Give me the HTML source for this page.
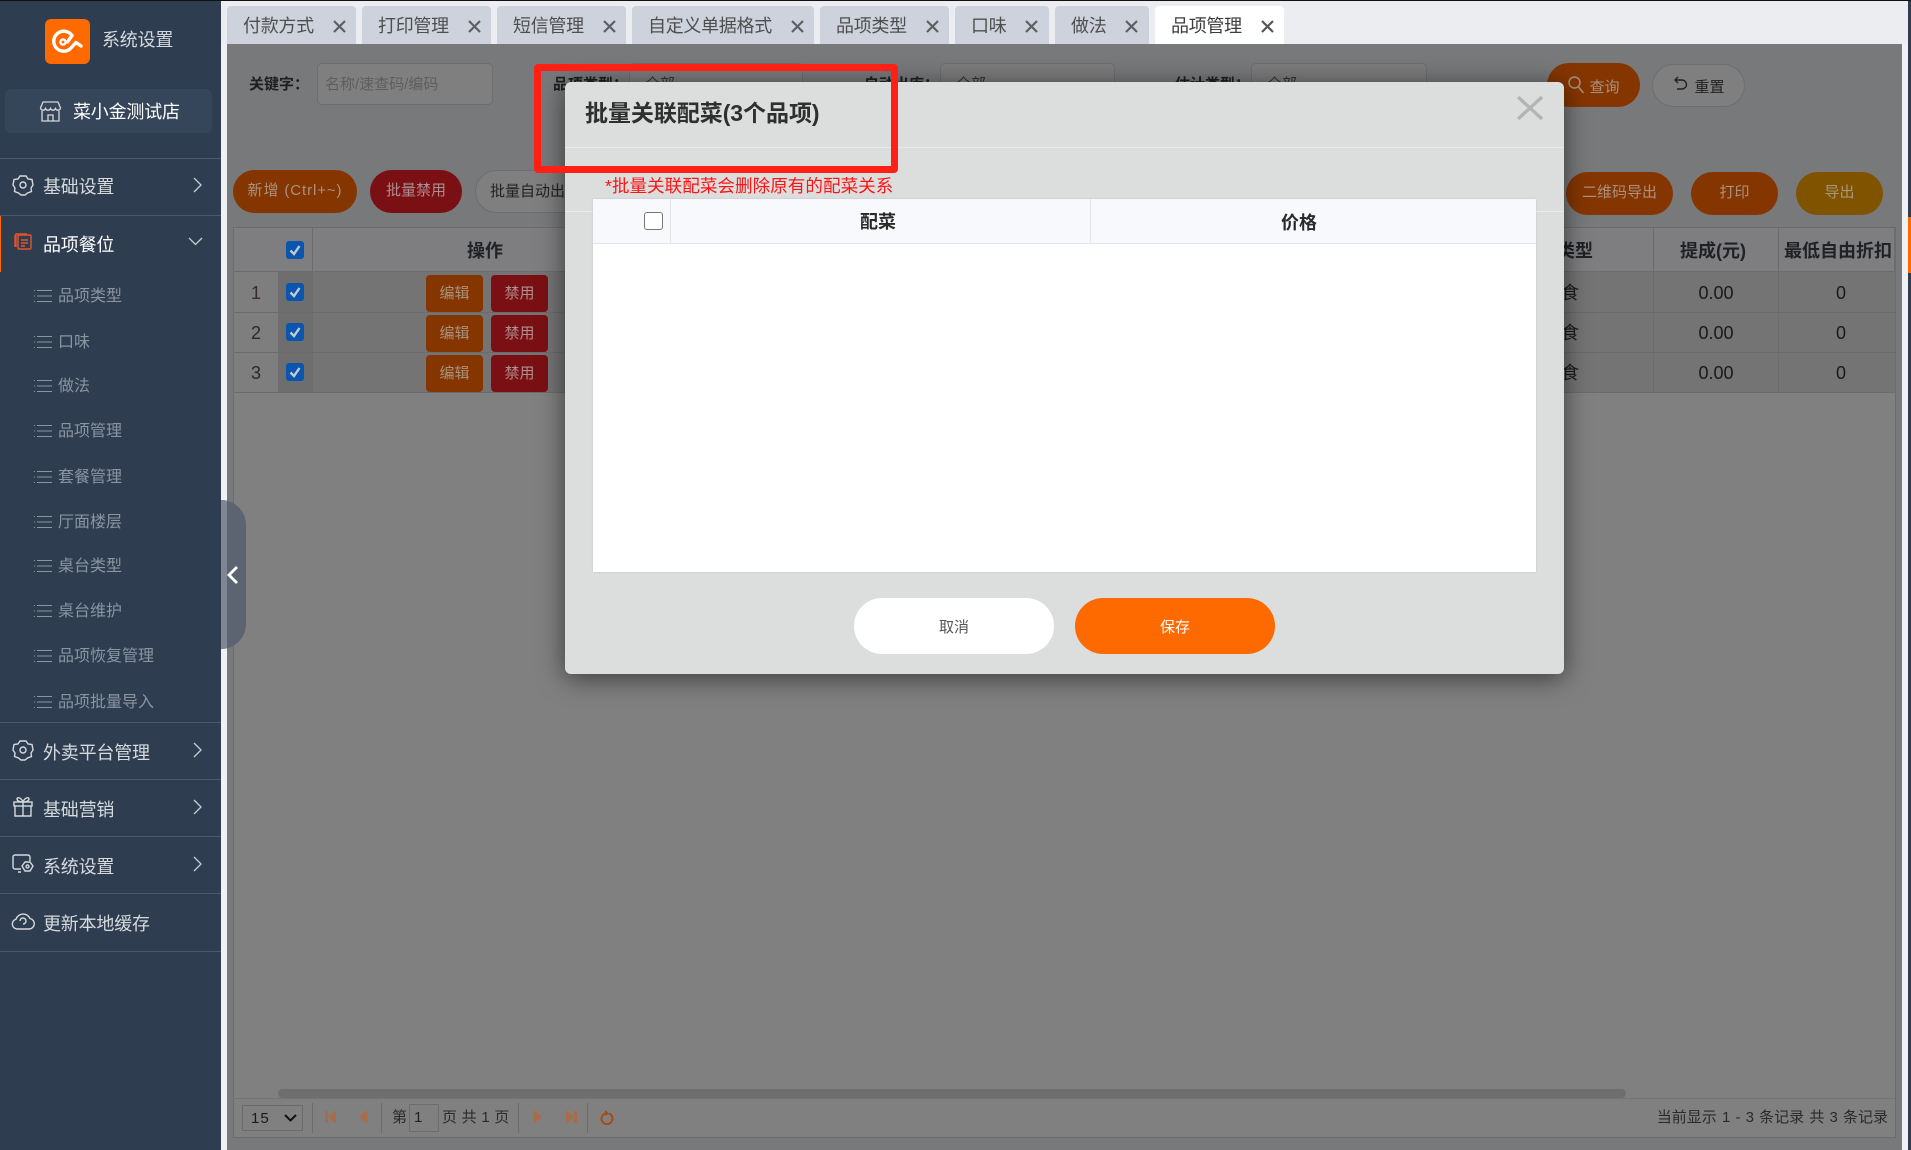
<!DOCTYPE html>
<html lang="zh"><head><meta charset="utf-8"><title>品项管理</title>
<style>
*{box-sizing:border-box}
html,body{margin:0;padding:0;width:1911px;height:1150px;overflow:hidden;background:#f0f1f4;font-family:"Liberation Sans","Noto Sans CJK SC",sans-serif;color:#222}
div,span,svg{position:absolute}
.t{white-space:nowrap;line-height:30px;height:30px}
.c{text-align:center}
.sb{left:0;top:0;width:221px;height:1150px;background:#2e3d50}
.ln{left:0;width:221px;height:1px;background:#4a596c}
.m{left:43px;font-size:18px;color:#d6dade;width:170px;margin-top:2px;letter-spacing:-.2px}
.s{left:58px;font-size:16px;color:#8b95a0;width:150px;margin-top:2px}
.ic{left:34px;width:18px;height:14px;margin-top:1px}
.tab{top:6px;height:38px;background:#cdd2dc;border-radius:4px 4px 0 0}
.tab b{position:absolute;left:16px;top:5px;font-weight:400;font-size:18px;line-height:30px;color:#4e4e4e;white-space:nowrap;letter-spacing:-.3px}
.tab svg{top:14px;width:13px;height:13px;margin-left:-1px}
.sel{height:42px;top:63px;background:#7c7c7d;border:1px solid #6c6d6f;border-radius:5px;font-size:15px;line-height:42px;padding-left:15px;color:#333}
.lab{top:70px;font-size:15px;font-weight:700;color:#1f1f1f;margin-left:-1px}
.pill{border-radius:22px;height:43px;font-size:15px;line-height:41px;text-align:center;white-space:nowrap}
.or{background:#853600;color:#a8917f}
.rd{background:#7a1014;color:#ad8f90}
.cb{width:18px;height:18px;left:286px;background:#0a55ad;border-radius:3px}
.cb svg{left:3px;top:3px;width:12px;height:12px}
.b{height:37px;width:57px;border-radius:4px;font-size:15px;line-height:38px;text-align:center}
.h{font-size:18px;font-weight:700;color:#1f2124}
.d{font-size:18px;color:#1a1a1a;margin-top:1px}
.vl{width:1px;background:#6c6c6d}
.hl{height:1px;background:#6b6b6c}
</style></head><body>

<!-- sidebar -->
<div class="sb"></div>
<div style="left:0;top:0;width:1911px;height:1px;background:#111;z-index:9"></div>
<div style="left:45px;top:19px;width:45px;height:45px;background:#ff6a00;border-radius:6px"></div>
<svg style="left:52px;top:29px" width="32" height="26" viewBox="0 0 32 26" fill="none" stroke="#fff" stroke-width="3.400" stroke-linecap="round" stroke-linejoin="round"><path d="M20 6.500A10 10 0 1 0 18 20L24 13.500 29 17"/><path d="M20 6.500L15.500 13"/><circle cx="11" cy="13" r="2.600" stroke-width="2.400"/></svg>
<div class="t" style="left:102px;top:25px;font-size:18px;color:#d5d8dc;letter-spacing:-.2px">系统设置</div>
<div style="left:5px;top:89px;width:207px;height:44px;background:#35465a;border-radius:6px"></div>
<svg style="left:39px;top:100px" width="23" height="23" viewBox="0 0 23 23" fill="none" stroke="#d5d9dd" stroke-width="1.300"><path d="M4 2h15l2.500 6a2.600 2.600 0 0 1-5 .5 2.700 2.700 0 0 1-5 0 2.700 2.700 0 0 1-5 0 2.600 2.600 0 0 1-5-.5z"/><path d="M3 11v10h17V11M9 21v-6h5v6"/></svg>
<div class="t" style="left:73px;top:97px;font-size:18px;color:#fff;letter-spacing:-.2px">菜小金测试店</div>
<div class="ln" style="top:158px"></div><div class="ln" style="top:215px"></div>
<svg style="left:12px;top:174px" width="22" height="22" viewBox="0 0 22 22" fill="none" stroke="#d5d9dd" stroke-width="1.400"><path d="M8 2h6l2 3 4 .5 1 5.500-2 3 .5 3.500-4 1.500L13 21H9l-2.500-2-4-1.500.5-3.500-2-3 1-5.500 4-.5z"/><circle cx="11" cy="11" r="3"/></svg>
<div class="t m" style="top:170px">基础设置</div>
<svg style="left:192px;top:176px" width="12" height="18" viewBox="0 0 12 18" fill="none" stroke="#c9ced3" stroke-width="1.300"><path d="M2 2l7 7-7 7"/></svg>

<div style="left:0;top:216px;width:1px;height:56px;background:#ff6a00"></div>
<svg style="left:14px;top:232px" width="18" height="19" viewBox="0 0 18 19" fill="none" stroke="#e2552b" stroke-width="1.400"><path d="M2 15V2h11"/><path d="M1 3v12"/><rect x="4" y="3" width="13" height="14" rx="1"/><path d="M7 8h7M7 11h7M7 14h4"/></svg>
<div class="t m" style="top:228px;color:#fff">品项餐位</div>
<svg style="left:187px;top:236px" width="17" height="11" viewBox="0 0 17 11" fill="none" stroke="#c9ced3" stroke-width="1.300"><path d="M2 2l6.500 6.500L15 2"/></svg>

<svg class="ic" style="top:288px" viewBox="0 0 18 14" stroke="#8b95a0" stroke-width="1"><path d="M0 1.500h1M0 7h1M0 12.500h1M3 1.500h15M3 7h15M3 12.500h15"/></svg><div class="t s" style="top:280px">品项类型</div>
<svg class="ic" style="top:334px" viewBox="0 0 18 14" stroke="#8b95a0" stroke-width="1"><path d="M0 1.500h1M0 7h1M0 12.500h1M3 1.500h15M3 7h15M3 12.500h15"/></svg><div class="t s" style="top:326px">口味</div>
<svg class="ic" style="top:378px" viewBox="0 0 18 14" stroke="#8b95a0" stroke-width="1"><path d="M0 1.500h1M0 7h1M0 12.500h1M3 1.500h15M3 7h15M3 12.500h15"/></svg><div class="t s" style="top:370px">做法</div>
<svg class="ic" style="top:423px" viewBox="0 0 18 14" stroke="#8b95a0" stroke-width="1"><path d="M0 1.500h1M0 7h1M0 12.500h1M3 1.500h15M3 7h15M3 12.500h15"/></svg><div class="t s" style="top:415px">品项管理</div>
<svg class="ic" style="top:469px" viewBox="0 0 18 14" stroke="#8b95a0" stroke-width="1"><path d="M0 1.500h1M0 7h1M0 12.500h1M3 1.500h15M3 7h15M3 12.500h15"/></svg><div class="t s" style="top:461px">套餐管理</div>
<svg class="ic" style="top:514px" viewBox="0 0 18 14" stroke="#8b95a0" stroke-width="1"><path d="M0 1.500h1M0 7h1M0 12.500h1M3 1.500h15M3 7h15M3 12.500h15"/></svg><div class="t s" style="top:506px">厅面楼层</div>
<svg class="ic" style="top:558px" viewBox="0 0 18 14" stroke="#8b95a0" stroke-width="1"><path d="M0 1.500h1M0 7h1M0 12.500h1M3 1.500h15M3 7h15M3 12.500h15"/></svg><div class="t s" style="top:550px">桌台类型</div>
<svg class="ic" style="top:603px" viewBox="0 0 18 14" stroke="#8b95a0" stroke-width="1"><path d="M0 1.500h1M0 7h1M0 12.500h1M3 1.500h15M3 7h15M3 12.500h15"/></svg><div class="t s" style="top:595px">桌台维护</div>
<svg class="ic" style="top:648px" viewBox="0 0 18 14" stroke="#8b95a0" stroke-width="1"><path d="M0 1.500h1M0 7h1M0 12.500h1M3 1.500h15M3 7h15M3 12.500h15"/></svg><div class="t s" style="top:640px">品项恢复管理</div>
<svg class="ic" style="top:694px" viewBox="0 0 18 14" stroke="#8b95a0" stroke-width="1"><path d="M0 1.500h1M0 7h1M0 12.500h1M3 1.500h15M3 7h15M3 12.500h15"/></svg><div class="t s" style="top:686px">品项批量导入</div>

<div class="ln" style="top:722px"></div>
<svg style="left:12px;top:739px" width="22" height="22" viewBox="0 0 22 22" fill="none" stroke="#d5d9dd" stroke-width="1.400"><path d="M8 2h6l2 3 4 .5 1 5.500-2 3 .5 3.500-4 1.500L13 21H9l-2.500-2-4-1.500.5-3.500-2-3 1-5.500 4-.5z"/><circle cx="11" cy="11" r="3"/></svg>
<div class="t m" style="top:736px">外卖平台管理</div>
<svg style="left:192px;top:741px" width="12" height="18" viewBox="0 0 12 18" fill="none" stroke="#c9ced3" stroke-width="1.300"><path d="M2 2l7 7-7 7"/></svg>
<div class="ln" style="top:779px"></div>
<svg style="left:12px;top:796px" width="22" height="22" viewBox="0 0 22 22" fill="none" stroke="#d5d9dd" stroke-width="1.400"><rect x="2" y="6" width="18" height="4"/><path d="M3 10v10h16V10M11 6v14M11 6C8 6 5 5 5 3s4-2 6 3c2-5 6-5 6-3s-3 3-6 3"/></svg>
<div class="t m" style="top:793px">基础营销</div>
<svg style="left:192px;top:798px" width="12" height="18" viewBox="0 0 12 18" fill="none" stroke="#c9ced3" stroke-width="1.300"><path d="M2 2l7 7-7 7"/></svg>
<div class="ln" style="top:836px"></div>
<svg style="left:12px;top:854px" width="22" height="20" viewBox="0 0 22 20" fill="none" stroke="#d5d9dd" stroke-width="1.400"><path d="M18 7V3a2 2 0 0 0-2-2H3a2 2 0 0 0-2 2v10a2 2 0 0 0 2 2h6M6 18h3"/><path d="M13 8h5l3 4-3 5h-5l-3-5z"/><circle cx="15.500" cy="12.500" r="1.500"/></svg>
<div class="t m" style="top:850px">系统设置</div>
<svg style="left:192px;top:855px" width="12" height="18" viewBox="0 0 12 18" fill="none" stroke="#c9ced3" stroke-width="1.300"><path d="M2 2l7 7-7 7"/></svg>
<div class="ln" style="top:893px"></div>
<svg style="left:11px;top:911px" width="24" height="19" viewBox="0 0 24 19" fill="none" stroke="#d5d9dd" stroke-width="1.400"><path d="M6 18a5 5 0 0 1-1-9.800A7.500 7.500 0 0 1 19 7.500 5.300 5.300 0 0 1 18 18z"/><path d="M9 10a3 3 0 1 1 3 3"/></svg>
<div class="t m" style="top:907px">更新本地缓存</div>
<div class="ln" style="top:951px"></div>

<!-- tabs -->
<div style="left:221px;top:1px;width:1690px;height:43px;background:#ebedf1"></div>
<div class="tab" style="left:227px;width:129px"><b>付款方式</b><svg style="left:107px" viewBox="0 0 13 13" stroke="#5d5f62" stroke-width="2.200"><path d="M1 1l11 11M12 1L1 12"/></svg></div>
<div class="tab" style="left:362px;width:129px"><b>打印管理</b><svg style="left:107px" viewBox="0 0 13 13" stroke="#5d5f62" stroke-width="2.200"><path d="M1 1l11 11M12 1L1 12"/></svg></div>
<div class="tab" style="left:497px;width:129px"><b>短信管理</b><svg style="left:107px" viewBox="0 0 13 13" stroke="#5d5f62" stroke-width="2.200"><path d="M1 1l11 11M12 1L1 12"/></svg></div>
<div class="tab" style="left:632px;width:182px"><b>自定义单据格式</b><svg style="left:160px" viewBox="0 0 13 13" stroke="#5d5f62" stroke-width="2.200"><path d="M1 1l11 11M12 1L1 12"/></svg></div>
<div class="tab" style="left:820px;width:129px"><b>品项类型</b><svg style="left:107px" viewBox="0 0 13 13" stroke="#5d5f62" stroke-width="2.200"><path d="M1 1l11 11M12 1L1 12"/></svg></div>
<div class="tab" style="left:955px;width:94px"><b>口味</b><svg style="left:71px" viewBox="0 0 13 13" stroke="#5d5f62" stroke-width="2.200"><path d="M1 1l11 11M12 1L1 12"/></svg></div>
<div class="tab" style="left:1055px;width:94px"><b>做法</b><svg style="left:71px" viewBox="0 0 13 13" stroke="#5d5f62" stroke-width="2.200"><path d="M1 1l11 11M12 1L1 12"/></svg></div>
<div class="tab" style="left:1155px;width:129px;background:#fff"><b style="color:#3c3c3c">品项管理</b><svg style="left:107px" viewBox="0 0 13 13" stroke="#555" stroke-width="2.200"><path d="M1 1l11 11M12 1L1 12"/></svg></div>

<div style="left:1908px;top:1px;width:3px;height:1149px;background:#2e3d50"></div>
<div style="left:1908px;top:217px;width:3px;height:56px;background:#ff6a00"></div>

<!-- dimmed page -->
<div style="left:227px;top:44px;width:1675px;height:1106px;background:#78797b"></div>
<div style="left:233px;top:392px;width:1662px;height:745px;background:#808080"></div>

<div class="t lab" style="left:250px">关键字：</div>
<div class="sel" style="left:317px;width:176px;color:#5e5e5e;padding-left:7px;background:#7f7f80">名称/速查码/编码</div>
<div class="t lab" style="left:554px">品项类型：</div>
<div class="sel" style="left:629px;width:174px">全部</div>
<div class="t lab" style="left:865px">自动出库：</div>
<div class="sel" style="left:940px;width:175px">全部</div>
<div class="t lab" style="left:1176px">估计类型：</div>
<div class="sel" style="left:1251px;width:176px">全部</div>

<div class="pill or" style="left:1547px;top:63px;width:93px;height:44px;padding-left:22px;line-height:50px">查询</div>
<svg style="left:1567px;top:75px" width="20" height="20" viewBox="0 0 20 20" fill="none" stroke="#a8917f" stroke-width="1.500"><circle cx="7.500" cy="7.500" r="5.500"/><path d="M11.500 12l5 6"/></svg>
<div class="pill" style="left:1652px;top:64px;width:93px;background:#7f7f7f;border:1px solid #6e6e6e;padding-left:22px;line-height:46px;color:#222">重置</div>
<svg style="left:1673px;top:76px" width="16" height="17" viewBox="0 0 16 17" fill="none" stroke="#222" stroke-width="1.400"><path d="M5 1L2 4l3 3M2 4h7a4.500 4.500 0 0 1 0 9H4"/></svg>

<div class="pill or" style="left:233px;top:170px;width:124px;letter-spacing:.9px">新增 (Ctrl+~)</div>
<div class="pill rd" style="left:370px;top:170px;width:92px">批量禁用</div>
<div class="pill" style="left:475px;top:170px;width:110px;background:#7f7f7f;border:1px solid #6e6e6e;color:#222;text-align:left;padding-left:14px">批量自动出库</div>
<div class="pill or" style="left:1566px;top:172px;width:107px">二维码导出</div>
<div class="pill or" style="left:1691px;top:172px;width:87px">打印</div>
<div class="pill" style="left:1796px;top:172px;width:87px;background:#7f5300;color:#a8977a">导出</div>

<!-- table -->
<div style="left:233px;top:227px;width:1662px;height:45px;background:#7e7e80;border:1px solid #6c6c6d"></div>
<div style="left:233px;top:272px;width:1662px;height:120px;background:#747474"></div>
<div style="left:234px;top:272px;width:44px;height:120px;background:#7e7e7e"></div>
<div style="left:278px;top:272px;width:34px;height:120px;background:#6e6e6e"></div>
<div class="hl" style="left:233px;top:312px;width:1662px"></div>
<div class="hl" style="left:233px;top:352px;width:1662px"></div>
<div class="hl" style="left:233px;top:392px;width:1662px"></div>
<div class="vl" style="left:233px;top:227px;height:910px"></div>
<div class="vl" style="left:1895px;top:227px;height:910px"></div>
<div class="vl" style="left:312px;top:227px;height:165px"></div>
<div class="vl" style="left:1653px;top:227px;height:165px"></div>
<div class="vl" style="left:1778px;top:227px;height:165px"></div>

<div class="cb" style="top:241px"><svg viewBox="0 0 12 12" fill="none" stroke="#c3c9d3" stroke-width="2.400"><path d="M1.500 6.500L5 10l5.500-8"/></svg></div>
<div class="cb" style="top:283px"><svg viewBox="0 0 12 12" fill="none" stroke="#c3c9d3" stroke-width="2.400"><path d="M1.500 6.500L5 10l5.500-8"/></svg></div>
<div class="cb" style="top:323px"><svg viewBox="0 0 12 12" fill="none" stroke="#c3c9d3" stroke-width="2.400"><path d="M1.500 6.500L5 10l5.500-8"/></svg></div>
<div class="cb" style="top:363px"><svg viewBox="0 0 12 12" fill="none" stroke="#c3c9d3" stroke-width="2.400"><path d="M1.500 6.500L5 10l5.500-8"/></svg></div>

<div class="t h c" style="left:445px;width:80px;top:236px">操作</div>
<div class="t h" style="left:1557px;top:236px">类型</div>
<div class="t h c" style="left:1653px;width:120px;top:236px">提成(元)</div>
<div class="t h c" style="left:1778px;width:120px;top:236px">最低自由折扣</div>

<div class="t d c" style="left:236px;width:40px;top:277px;color:#3a2a2a">1</div>
<div class="t d c" style="left:236px;width:40px;top:317px;color:#2a2a2a">2</div>
<div class="t d c" style="left:236px;width:40px;top:357px;color:#2a2a2a">3</div>
<div class="b or" style="left:426px;top:275px">编辑</div><div class="b rd" style="left:491px;top:275px">禁用</div>
<div class="b or" style="left:426px;top:315px">编辑</div><div class="b rd" style="left:491px;top:315px">禁用</div>
<div class="b or" style="left:426px;top:355px">编辑</div><div class="b rd" style="left:491px;top:355px">禁用</div>
<div class="t d" style="left:1543px;top:277px">主食</div><div class="t d c" style="left:1656px;width:120px;top:277px">0.00</div><div class="t d c" style="left:1781px;width:120px;top:277px">0</div>
<div class="t d" style="left:1543px;top:317px">主食</div><div class="t d c" style="left:1656px;width:120px;top:317px">0.00</div><div class="t d c" style="left:1781px;width:120px;top:317px">0</div>
<div class="t d" style="left:1543px;top:357px">主食</div><div class="t d c" style="left:1656px;width:120px;top:357px">0.00</div><div class="t d c" style="left:1781px;width:120px;top:357px">0</div>

<!-- pager -->
<div style="left:278px;top:1089px;width:1348px;height:9px;background:#6e6e6e;border-radius:5px"></div>
<div class="hl" style="left:233px;top:1098px;width:1662px;background:#747474"></div>
<div class="hl" style="left:233px;top:1137px;width:1663px"></div>
<div style="left:242px;top:1105px;width:61px;height:26px;border:1px solid #6a6a6a;font-size:15px;line-height:25px;padding-left:8px;color:#1a1a1a;letter-spacing:1px">15</div>
<svg style="left:284px;top:1114px" width="13" height="8" viewBox="0 0 13 8" fill="none" stroke="#111" stroke-width="2"><path d="M1 1l5.500 5.500L12 1"/></svg>
<div class="vl" style="left:312px;top:1103px;height:30px"></div>
<div class="vl" style="left:381px;top:1103px;height:30px"></div>
<div class="vl" style="left:518px;top:1103px;height:30px"></div>
<div class="vl" style="left:587px;top:1103px;height:30px"></div>
<svg style="left:325px;top:1110px" width="12" height="14" viewBox="0 0 12 14" fill="#a86c48"><path d="M0 1h3v12H0zM11 0v14L3.500 7z"/></svg>
<svg style="left:359px;top:1110px" width="9" height="14" viewBox="0 0 9 14" fill="#a86c48"><path d="M8.500 0v14L0 7z"/></svg>
<svg style="left:533px;top:1110px" width="9" height="14" viewBox="0 0 9 14" fill="#a86c48"><path d="M.5 0v14L9 7z"/></svg>
<svg style="left:565px;top:1110px" width="12" height="14" viewBox="0 0 12 14" fill="#a86c48"><path d="M1 0v14l7.500-7zM9 1h3v12H9z"/></svg>
<svg style="left:600px;top:1110px" width="14" height="15" viewBox="0 0 14 15" fill="none" stroke="#a84a10" stroke-width="2"><path d="M9 3.500a5.500 5.500 0 1 1-4 0"/><path d="M5 0l4 3.500-4 2.500" fill="#a84a10" stroke="none"/></svg>
<div class="t" style="left:392px;top:1103px;font-size:15px;color:#2b2b2b">第</div>
<div style="left:409px;top:1104px;width:30px;height:28px;border:1px solid #6e6e6e;font-size:15px;line-height:26px;padding-left:4px;color:#222">1</div>
<div class="t" style="left:442px;top:1103px;font-size:15px;color:#2b2b2b;word-spacing:.5px">页 共 1 页</div>
<div class="t" style="left:1600px;width:288px;text-align:right;top:1103px;font-size:15px;color:#2b2b2b;word-spacing:1px">当前显示 1 - 3 条记录 共 3 条记录</div>

<!-- collapse handle -->
<div style="left:221px;top:500px;width:25px;height:149px;background:#5c6471;border-radius:0 25px 25px 0;overflow:hidden"><div style="left:0;top:0;width:6px;height:149px;background:#7f8794"></div></div>
<svg style="left:226px;top:565px" width="13" height="20" viewBox="0 0 13 20" fill="none" stroke="#fff" stroke-width="2.800"><path d="M11 2L3 10l8 8"/></svg>

<!-- modal -->
<div style="left:565px;top:82px;width:999px;height:592px;background:#dcdedd;border-radius:6px;box-shadow:0 4px 26px rgba(0,0,0,.55)"></div>
<div style="left:565px;top:147px;width:999px;height:1px;background:#e8e9e9"></div>
<div style="left:565px;top:211px;width:999px;height:1px;background:#e8e9e9"></div>
<div class="t" style="left:585px;top:98px;font-size:23px;font-weight:700;color:#2f2f2f;letter-spacing:-.05px">批量关联配菜(3个品项)</div>
<svg style="left:1517px;top:96px" width="26" height="24" viewBox="0 0 26 24" stroke="#b4b4b4" stroke-width="3.400"><path d="M1 1l24 22M25 1L1 23"/></svg>
<div class="t" style="left:605px;top:171px;font-size:17.600px;color:#ff1414">*批量关联配菜会删除原有的配菜关系</div>

<div style="left:593px;top:199px;width:943px;height:373px;background:#fff;box-shadow:0 0 2px rgba(0,0,0,.12)"></div>
<div style="left:593px;top:199px;width:943px;height:45px;background:#f8f9fd;border-bottom:1px solid #e4e5e8"></div>
<div style="left:670px;top:199px;width:1px;height:45px;background:#e4e5e8"></div>
<div style="left:1090px;top:199px;width:1px;height:45px;background:#e4e5e8"></div>
<div style="left:644px;top:212px;width:19px;height:18px;background:#fff;border:1.500px solid #777;border-radius:3px"></div>
<div class="t h c" style="left:668px;width:420px;top:207px;color:#2a2a2a">配菜</div>
<div class="t h c" style="left:1090px;width:418px;top:208px;color:#2a2a2a">价格</div>

<div style="left:854px;top:598px;width:200px;height:56px;background:#fff;border-radius:28px;text-align:center;font-size:15px;line-height:59px;color:#555">取消</div>
<div style="left:1075px;top:598px;width:200px;height:56px;background:#ff6a00;border-radius:28px;text-align:center;font-size:15px;line-height:59px;color:#fff">保存</div>

<!-- red annotation -->
<div style="left:534px;top:64px;width:364px;height:109px;border:7px solid #ff2015;border-radius:4px"></div>
</body></html>
